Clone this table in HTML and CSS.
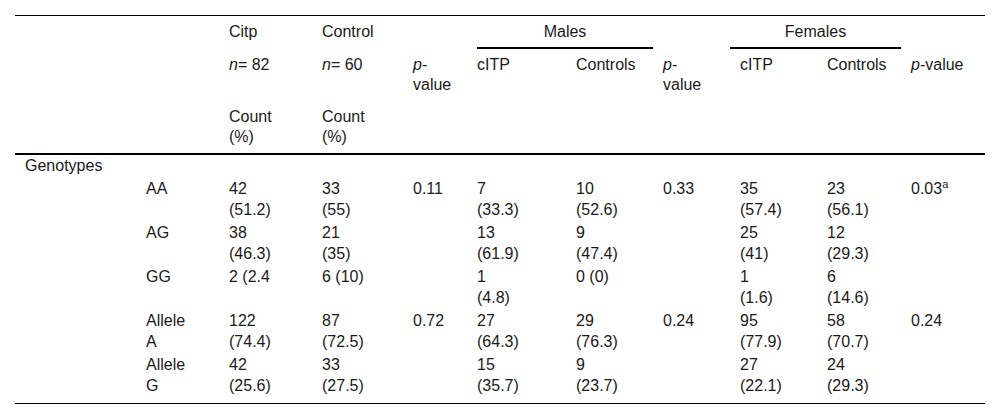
FILE: index.html
```html
<!DOCTYPE html>
<html>
<head>
<meta charset="utf-8">
<link rel="stylesheet" href="styles.css">
</head>
<body>
<div class="wrap">
<table class="tbl">
  <colgroup>
    <col class="w1"><col class="w2"><col class="w3"><col class="w4"><col class="w5"><col class="w6"><col class="w7"><col class="w8"><col class="w9"><col class="w10"><col class="w11">
  </colgroup>
  <thead>
    <tr>
      <th></th><th></th>
      <th>Citp</th>
      <th>Control</th>
      <th></th>
      <th colspan="2" class="grp grp-m"><div class="grp-label">Males</div></th>
      <th></th>
      <th colspan="2" class="grp grp-f"><div class="grp-label">Females</div></th>
      <th></th>
    </tr>
    <tr>
      <th></th><th></th>
      <th><i>n</i>= 82</th>
      <th><i>n</i>= 60</th>
      <th><i>p</i>-<br>value</th>
      <th>cITP</th>
      <th>Controls</th>
      <th><i>p</i>-<br>value</th>
      <th>cITP</th>
      <th>Controls</th>
      <th><i>p</i>-value</th>
    </tr>
    <tr class="last">
      <th></th><th></th>
      <th>Count<br>(%)</th>
      <th>Count<br>(%)</th>
      <th></th><th></th><th></th><th></th><th></th><th></th><th></th>
    </tr>
  </thead>
  <tbody>
    <tr class="section">
      <td>Genotypes</td><td></td><td></td><td></td><td></td><td></td><td></td><td></td><td></td><td></td><td></td>
    </tr>
    <tr>
      <td></td><td>AA</td><td>42<br>(51.2)</td><td>33<br>(55)</td><td>0.11</td><td>7<br>(33.3)</td><td>10<br>(52.6)</td><td>0.33</td><td>35<br>(57.4)</td><td>23<br>(56.1)</td><td>0.03<sup>a</sup></td>
    </tr>
    <tr>
      <td></td><td>AG</td><td>38<br>(46.3)</td><td>21<br>(35)</td><td></td><td>13<br>(61.9)</td><td>9<br>(47.4)</td><td></td><td>25<br>(41)</td><td>12<br>(29.3)</td><td></td>
    </tr>
    <tr>
      <td></td><td>GG</td><td>2 (2.4</td><td>6 (10)</td><td></td><td>1<br>(4.8)</td><td>0 (0)</td><td></td><td>1<br>(1.6)</td><td>6<br>(14.6)</td><td></td>
    </tr>
    <tr>
      <td></td><td>Allele<br>A</td><td>122<br>(74.4)</td><td>87<br>(72.5)</td><td>0.72</td><td>27<br>(64.3)</td><td>29<br>(76.3)</td><td>0.24</td><td>95<br>(77.9)</td><td>58<br>(70.7)</td><td>0.24</td>
    </tr>
    <tr class="end">
      <td></td><td>Allele<br>G</td><td>42<br>(25.6)</td><td>33<br>(27.5)</td><td></td><td>15<br>(35.7)</td><td>9<br>(23.7)</td><td></td><td>27<br>(22.1)</td><td>24<br>(29.3)</td><td></td>
    </tr>
  </tbody>
</table>
</div>
</body>
</html>
```

FILE: styles.css
```css
html, body {
  margin: 0;
  padding: 0;
  background: #ffffff;
}

.wrap {
  padding: 15px 15px 0 15px;
}

.tbl {
  width: 970px;
  border-collapse: collapse;
  table-layout: fixed;
  font-family: "Liberation Sans", Arial, sans-serif;
  font-size: 16px;
  line-height: 20px;
  color: #1a1a1a;
  border-top: 1px solid #000;
  border-bottom: 1px solid #000;
}

.w1 { width: 121px; }
.w2 { width: 83px; }
.w3 { width: 93px; }
.w4 { width: 91px; }
.w5 { width: 64px; }
.w6 { width: 99px; }
.w7 { width: 87px; }
.w8 { width: 77px; }
.w9 { width: 87px; }
.w10 { width: 84px; }
.w11 { width: 84px; }

.tbl th,
.tbl td {
  text-align: left;
  vertical-align: top;
  font-weight: normal;
  padding: 6px 0 6px 10px;
  white-space: nowrap;
}

.tbl thead tr.last th {
  border-bottom: 2px solid #000;
}

.tbl tbody td {
  line-height: 21px;
  padding-top: 0;
  padding-bottom: 2px;
}

.tbl tbody tr.end td {
  padding-bottom: 7px;
}

.tbl i {
  font-style: italic;
}

.tbl sup {
  font-size: 11px;
  line-height: 0;
  vertical-align: 6px;
}

.tbl .grp {
  padding-bottom: 0;
}

.grp-label {
  text-align: center;
  padding-bottom: 5px;
  border-bottom: 2px solid #000;
}

.tbl .grp-f {
  padding-left: 0;
}
```
